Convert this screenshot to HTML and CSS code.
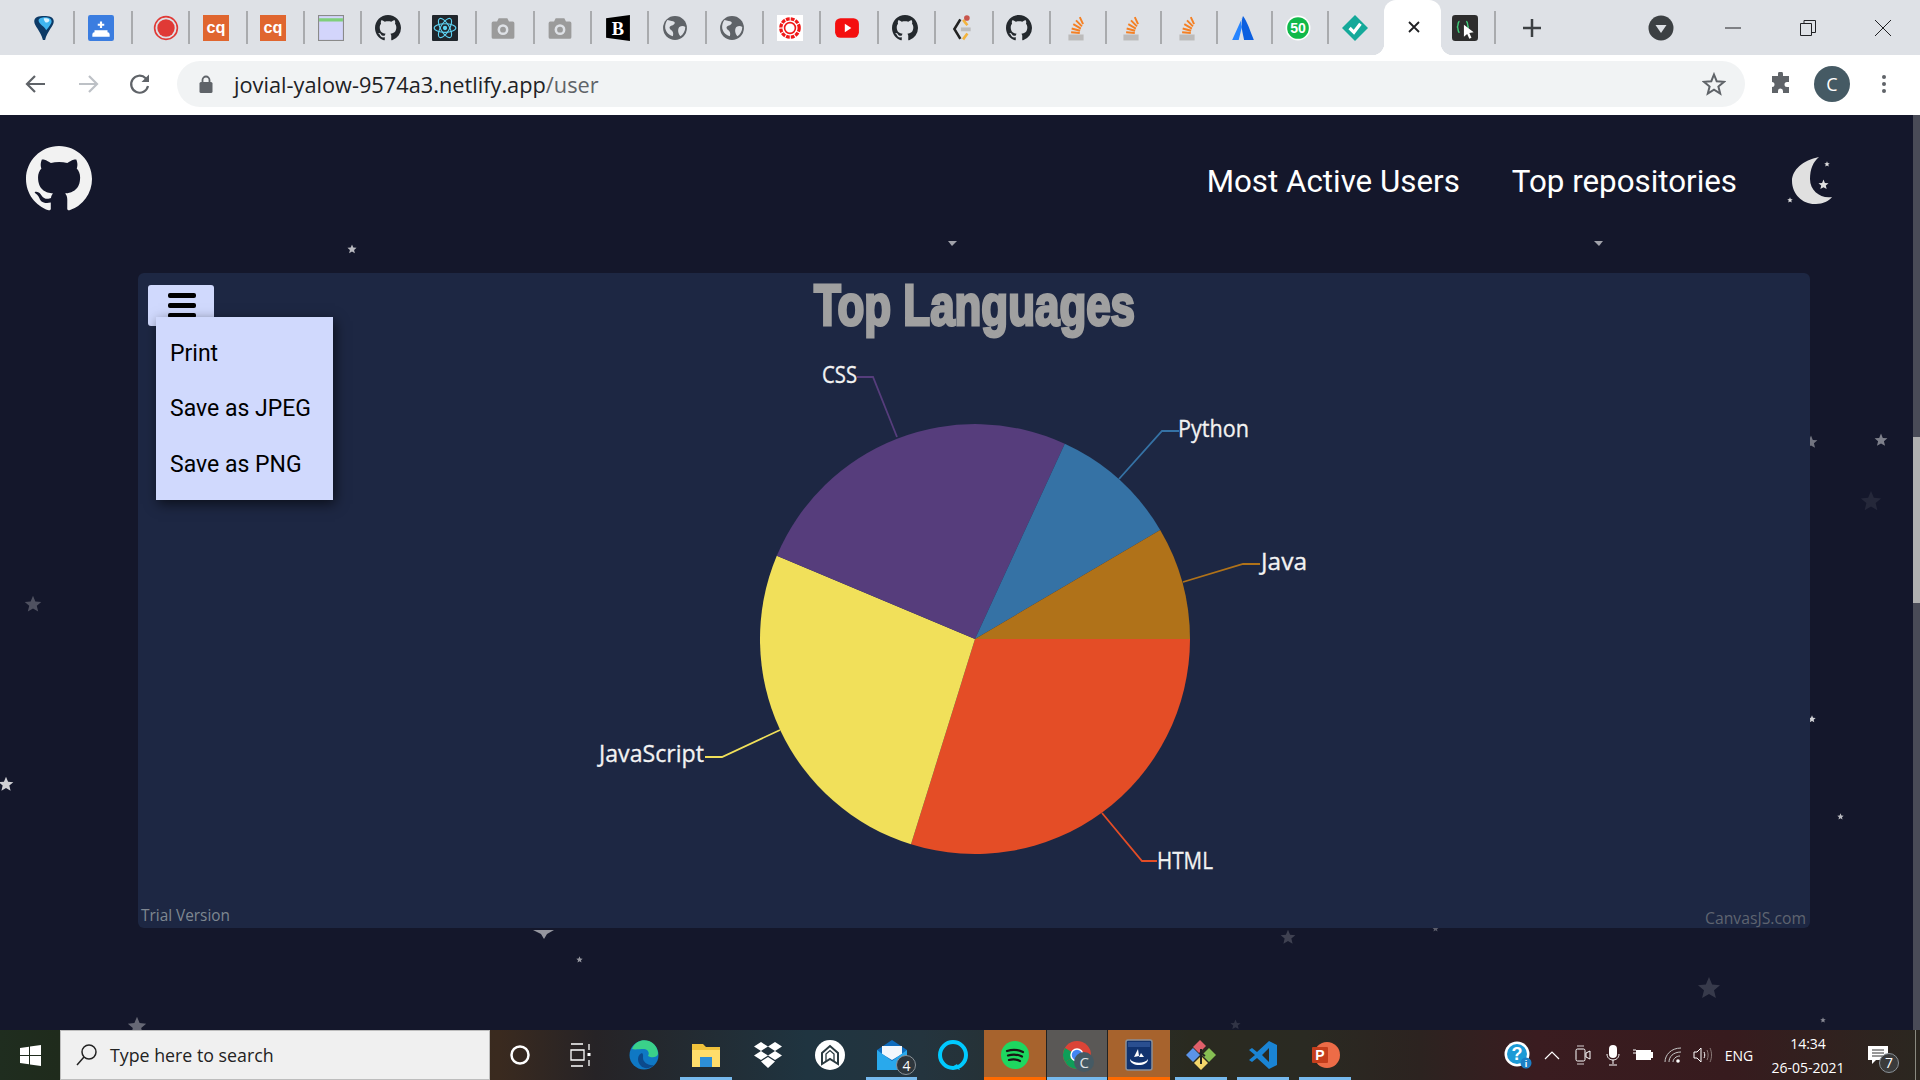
FILE: index.html
```html
<!DOCTYPE html>
<html lang="en">
<head>
    <meta charset="UTF-8">
    <title>Top Languages</title>
    <link rel="stylesheet" href="styles.css">
</head>
<body>

    <svg class="defs" width="0" height="0">
        <symbol id="gh" viewBox="0 0 16 16"><path d="M8 0C3.58 0 0 3.58 0 8c0 3.54 2.29 6.53 5.47 7.59.4.07.55-.17.55-.38 0-.19-.01-.82-.01-1.49-2.01.37-2.53-.49-2.69-.94-.09-.23-.48-.94-.82-1.13-.28-.15-.68-.52-.01-.53.63-.01 1.08.58 1.23.82.72 1.21 1.87.87 2.33.66.07-.52.28-.87.51-1.07-1.78-.2-3.64-.89-3.64-3.95 0-.87.31-1.59.82-2.15-.08-.2-.36-1.02.08-2.12 0 0 .67-.21 2.2.82.64-.18 1.32-.27 2-.27.68 0 1.36.09 2 .27 1.53-1.04 2.2-.82 2.2-.82.44 1.1.16 1.92.08 2.12.51.56.82 1.27.82 2.15 0 3.07-1.87 3.75-3.65 3.95.29.25.54.73.54 1.48 0 1.07-.01 1.93-.01 2.2 0 .21.15.46.55.38A8.013 8.013 0 0016 8c0-4.42-3.58-8-8-8z"/></symbol>
        <symbol id="so" viewBox="0 0 24 24"><rect x="5" y="18" width="14" height="5.500" fill="#bcbbbb"/><path d="M7.500 16l8 .6M8 12.500l7.800 2M9.500 8.500l7 4M12 5l5.500 5.500M15.500 2l3 6.500" fill="none" stroke="#f48024" stroke-width="1.800"/></symbol>
        <symbol id="cam" viewBox="0 0 24 24"><path d="M8 3h8l1.500 3H21a1.500 1.500 0 0 1 1.500 1.500v13A1.500 1.500 0 0 1 21 22H3a1.500 1.500 0 0 1-1.500-1.500v-13A1.500 1.500 0 0 1 3 6h3.500z" fill="#9b9b9b"/><circle cx="12" cy="13.500" r="5" fill="#dee1e6"/><circle cx="12" cy="13.500" r="2.700" fill="#9b9b9b"/></symbol>
        <symbol id="globe" viewBox="0 0 24 24"><circle cx="12" cy="12" r="11" fill="#5f6368"/><path d="M5 4.500c3 1 5 .5 6.500 2 1 1.500-1 3-3 3.500s-2 2.500-.5 3.500c2 1 3 3 2 6-3-.5-6-3-7-7-.5-3 .5-6 2-8zM16 11c2-1 4-1 5.500 0 0 4-2 7-4.500 8.500-2-2-3-6-1-8.500z" fill="#dee1e6"/></symbol>
        <symbol id="star" viewBox="0 0 24 24"><polygon points="12 1 15.100 8.500 23 9.200 17 14.300 18.900 22 12 18 5.100 22 7 14.300 1 9.200 8.900 8.500"/></symbol>
    </svg>

    <!-- browser tabs -->
    <div class="tabstrip">
        <div class="tab"><svg class="fav" viewBox="0 0 24 24"><path d="M3 6C3 2 7 1 12 1s9 1 9 5c0 4-6 9-8 17h-2C9 15 3 10 3 6z" fill="#0d3a66"/><path d="M7 5c0-2 3-3 6-3s6 1 6 4c0 2-3 6-5 8-1-3-7-6-7-9z" fill="#3fb5f0"/><path d="M12 3c2 0 5 0 5 2 0 1-2 2-3 2s-3-4-2-4z" fill="#d6f1ff"/></svg></div>
        <div class="tab"><svg class="fav" viewBox="0 0 24 24"><rect x="0" y="0" width="24" height="24" rx="2" fill="#3b7de0"/><path d="M11 6h2v2h2v2h-2v2h-2v-2H9V8h2zM6 14h12v2a2 2 0 0 1 2 2v2H4v-2a2 2 0 0 1 2-2z" fill="#fff"/></svg></div>
        <div class="tab"><svg class="fav fav-nudge" viewBox="0 0 24 24"><circle cx="12" cy="12" r="10.500" fill="none" stroke="#e03a36" stroke-width="1.500"/><circle cx="12" cy="12" r="8" fill="#e03a36"/></svg></div>
        <div class="tab"><svg class="fav" viewBox="0 0 24 24"><rect width="24" height="24" fill="#e0662f"/><text x="12" y="17" class="cq">cq</text></svg></div>
        <div class="tab"><svg class="fav" viewBox="0 0 24 24"><rect width="24" height="24" fill="#e0662f"/><text x="12" y="17" class="cq">cq</text></svg></div>
        <div class="tab"><svg class="fav" viewBox="0 0 24 24"><rect x=".5" y=".5" width="23" height="23" fill="#d3d5fb" stroke="#8a8a8a"/><rect x="1" y="3" width="22" height="3" fill="#7fcf7a"/></svg></div>
        <div class="tab"><svg class="fav gh-dark"><use href="#gh"/></svg></div>
        <div class="tab"><svg class="fav" viewBox="0 0 24 24"><rect width="24" height="24" rx="1" fill="#20262c"/><g fill="none" stroke="#5ed3f3" stroke-width="1"><ellipse cx="12" cy="12" rx="10" ry="4"/><ellipse cx="12" cy="12" rx="10" ry="4" transform="rotate(60 12 12)"/><ellipse cx="12" cy="12" rx="10" ry="4" transform="rotate(120 12 12)"/></g><circle cx="12" cy="12" r="2" fill="#5ed3f3"/></svg></div>
        <div class="tab"><svg class="fav"><use href="#cam"/></svg></div>
        <div class="tab"><svg class="fav"><use href="#cam"/></svg></div>
        <div class="tab"><svg class="fav" viewBox="0 0 24 24"><polygon points="1 3 23 0 23 24 1 21" fill="#000"/><text x="12" y="18" class="bold-b">B</text></svg></div>
        <div class="tab"><svg class="fav"><use href="#globe"/></svg></div>
        <div class="tab"><svg class="fav"><use href="#globe"/></svg></div>
        <div class="tab"><svg class="fav" viewBox="0 0 24 24"><rect width="24" height="24" fill="#fff"/><circle cx="12" cy="12" r="8.500" fill="none" stroke="#f01818" stroke-width="3" stroke-dasharray="3.500 1"/><circle cx="12" cy="12" r="5" fill="none" stroke="#f01818" stroke-width="1.500"/></svg></div>
        <div class="tab"><svg class="fav" viewBox="0 0 24 24"><rect x="1" y="3" width="22" height="18" rx="5" fill="#f40f0f"/><polygon points="10 8 16 12 10 16" fill="#fff"/></svg></div>
        <div class="tab"><svg class="fav gh-dark"><use href="#gh"/></svg></div>
        <div class="tab"><svg class="fav" viewBox="0 0 24 24"><path d="M10.500 4 5 13l5.500 9" fill="none" stroke="#222" stroke-width="2.400"/><path d="M13 4.500l4 5M17 17l-4 5.500" fill="none" stroke="#f3b33d" stroke-width="2.400"/><rect x="11" y="11.500" width="9" height="3.500" fill="#bcbcbc"/><circle cx="16.500" cy="2.800" r="2.600" fill="#c8554c"/></svg></div>
        <div class="tab"><svg class="fav gh-dark"><use href="#gh"/></svg></div>
        <div class="tab tab-narrow"><svg class="fav"><use href="#so"/></svg></div>
        <div class="tab tab-narrow"><svg class="fav"><use href="#so"/></svg></div>
        <div class="tab tab-narrow"><svg class="fav"><use href="#so"/></svg></div>
        <div class="tab tab-narrow"><svg class="fav" viewBox="0 0 24 24"><path d="M12 1c-2 3-2.500 7-1 10l-3 12H2z" fill="#2684ff"/><path d="M12 1c4 5 7 15 10 22h-9c-1-6-4-14-1-22z" fill="#0b5fe0"/></svg></div>
        <div class="tab tab-narrow"><svg class="fav" viewBox="0 0 24 24"><circle cx="12" cy="12" r="11.500" fill="#fff"/><circle cx="12" cy="12" r="10" fill="#10b94a"/><text x="12" y="17" class="fifty">50</text></svg></div>
        <div class="tab tab-plain"><svg class="fav" viewBox="0 0 24 24"><polygon points="12 0 24 12 12 24 0 12" fill="#14a99a"/><path d="M7 12l4 4 6-8" fill="none" stroke="#fff" stroke-width="3"/></svg></div>
        <div class="tab-active"><svg class="glyph" width="14" height="14" viewBox="0 0 14 14"><path d="M2 2l10 10M12 2L2 12" stroke="#202124" stroke-width="1.800"/></svg></div>
        <div class="tab tab-last"><svg class="fav" viewBox="0 0 24 24"><rect width="24" height="24" rx="3" fill="#2d2d2d"/><path d="M7 6C5 6 6 10 5 11c1 1 0 5 2 5M13 6c2 0 1 4 2 5-1 1 0 5-2 5" fill="none" stroke="#3fce7a" stroke-width="1.300"/><polygon points="11 9 20 16 16 16.500 18 21 16 22 14 17.500 11 20" fill="#fff"/></svg></div>
        <div class="newtab"><svg width="20" height="20" viewBox="0 0 20 20"><path d="M10 1v18M1 10h18" stroke="#3c4043" stroke-width="2.500"/></svg></div>
        <div class="strip-right">
            <div class="tabsearch"><svg width="26" height="26" viewBox="0 0 26 26"><circle cx="13" cy="13" r="12.500" fill="#3c4043"/><polygon points="7.500 10 18.500 10 13 18" fill="#dee1e6"/></svg></div>
            <div class="winbtn"><svg width="16" height="16" viewBox="0 0 16 16"><path d="M0 8h16" stroke="#202124" stroke-width="1"/></svg></div>
            <div class="winbtn"><svg width="16" height="16" viewBox="0 0 16 16"><path d="M.5 3.500h11v12H.5zM4 3.500V.500h11.500V12.500H11.500" fill="none" stroke="#202124" stroke-width="1"/></svg></div>
            <div class="winbtn"><svg width="16" height="16" viewBox="0 0 16 16"><path d="M0 0l16 16M16 0L0 16" stroke="#202124" stroke-width="1"/></svg></div>
        </div>
    </div>

    <!-- address bar -->
    <div class="toolbar">
        <div class="navbtn"><svg width="24" height="24" viewBox="0 0 24 24"><path d="M21 12H4M11 4l-8 8 8 8" fill="none" stroke="#5f6368" stroke-width="2.200"/></svg></div>
        <div class="navbtn"><svg width="24" height="24" viewBox="0 0 24 24"><path d="M3 12h17M13 4l8 8-8 8" fill="none" stroke="#bdc1c6" stroke-width="2.200"/></svg></div>
        <div class="navbtn"><svg width="24" height="24" viewBox="0 0 24 24"><path d="M20 14a8.500 8.500 0 1 1-2.300-7.800L20 8.500" fill="none" stroke="#5f6368" stroke-width="2.200"/><polygon points="21 2.500 21 10 13.500 10" fill="#5f6368"/></svg></div>
        <div class="omnibox">
            <svg class="lock" width="14" height="18" viewBox="0 0 14 18"><path d="M3.500 8V5a3.500 3.500 0 0 1 7 0v3" fill="none" stroke="#5f6368" stroke-width="1.800"/><rect x="0.500" y="7" width="13" height="11" rx="1.500" fill="#5f6368"/></svg>
            <span class="url">jovial-yalow-9574a3.netlify.app<span class="url-path">/user</span></span>
            <svg class="bookmark" width="24" height="24" viewBox="0 0 24 24"><polygon points="12 2.500 14.700 9.200 22 9.800 16.400 14.500 18.200 21.500 12 17.700 5.800 21.500 7.600 14.500 2 9.800 9.300 9.200" fill="none" stroke="#5f6368" stroke-width="2"/></svg>
        </div>
        <svg class="puzzle" width="24" height="24" viewBox="0 0 24 24"><path d="M9 2a2.500 2.500 0 0 1 5 0v2h6v6h-2a2.500 2.500 0 0 0 0 5h2v6h-6v-2a2.500 2.500 0 0 0-5 0v2H3v-6a2.500 2.500 0 0 0 0-5V4h6z" fill="#5f6368"/></svg>
        <div class="avatar">C</div>
        <svg class="kebab" width="6" height="20" viewBox="0 0 6 20"><circle cx="3" cy="3" r="2" fill="#5f6368"/><circle cx="3" cy="10" r="2" fill="#5f6368"/><circle cx="3" cy="17" r="2" fill="#5f6368"/></svg>
    </div>

    <!-- the page -->
    <div class="page">
        <svg class="sky" viewBox="0 115 1913 915" fill="#fff">
            <use href="#star" x="347" y="244" width="10" height="10" opacity=".7"/>
            <polygon points="948,241 957,241 952,246" opacity=".6"/>
            <polygon points="1594,241 1603,241 1599,246" opacity=".6"/>
            <use href="#star" x="1874" y="433" width="14" height="14" opacity=".45"/>
            <use href="#star" x="1860" y="490" width="22" height="22" opacity=".07"/>
            <use href="#star" x="24" y="595" width="18" height="18" opacity=".25"/>
            <use href="#star" x="-2" y="776" width="16" height="16" opacity=".8"/>
            <use href="#star" x="1808" y="715" width="8" height="8" opacity=".8"/>
            <use href="#star" x="1837" y="813" width="7" height="7" opacity=".7"/>
            <use href="#star" x="1804" y="435" width="14" height="14" opacity=".4"/>
            <polygon points="533,930 554,930 547,934 544,939 541,934" opacity=".55"/>
            <use href="#star" x="576" y="956" width="7" height="7" opacity=".55"/>
            <use href="#star" x="127" y="1016" width="20" height="20" opacity=".35"/>
            <use href="#star" x="1697" y="976" width="24" height="24" opacity=".15"/>
            <use href="#star" x="1280" y="929" width="16" height="16" opacity=".18"/>
            <use href="#star" x="1432" y="925" width="7" height="7" opacity=".3"/>
            <use href="#star" x="1820" y="1017" width="6" height="6" opacity=".5"/>
            <use href="#star" x="1230" y="1019" width="11" height="11" opacity=".12"/>
        </svg>

        <div class="content">
            <nav class="navbar">
                <svg class="logo"><use href="#gh"/></svg>
                <div class="navlinks">
                    <a class="navlink">Most Active Users</a>
                    <a class="navlink">Top repositories</a>
                    <svg class="moon" width="48" height="52" viewBox="0 0 48 52">
                        <path d="M32 2C16 5 5 15 5 26 5 40 17 50 29 49 36 49 42 46 45 42 34 44 23 36 23 24 23 14 26 7 32 2Z" fill="#e0e0e0"/>
                        <use href="#star" x="37" y="6" width="6" height="6" fill="#e0e0e0"/>
                        <use href="#star" x="31" y="24" width="11" height="11" fill="#e0e0e0"/>
                        <use href="#star" x="0" y="42" width="6" height="6" fill="#e0e0e0"/>
                    </svg>
                </div>
            </nav>

            <div class="chart">
                <svg class="chart-canvas" viewBox="138 273 1672 655">
                    <text class="chart-title" x="814" y="325" textLength="321" lengthAdjust="spacingAndGlyphs">Top Languages</text>

                    <path d="M975 639L1190 639A215 215 0 0 1 911 844.300Z" fill="#e44d26"/>
                    <path d="M975 639L911 844.300A215 215 0 0 1 776.800 555.700Z" fill="#f1e05a"/>
                    <path d="M975 639L776.800 555.700A215 215 0 0 1 1064.800 443.700Z" fill="#563d7c"/>
                    <path d="M975 639L1064.800 443.700A215 215 0 0 1 1160.200 529.900Z" fill="#3572a5"/>
                    <path d="M975 639L1160.200 529.900A215 215 0 0 1 1190 639Z" fill="#b07219"/>

                    <polyline class="leader" points="897,437 873,377 857,377" stroke="#563d7c"/>
                    <polyline class="leader" points="1119,479 1162,431 1179,431" stroke="#3572a5"/>
                    <polyline class="leader" points="1183,582 1243,564 1260,564" stroke="#b07219"/>
                    <polyline class="leader" points="780,730 722,757 705,757" stroke="#f1e05a"/>
                    <polyline class="leader" points="1102,813 1142,861 1157,861" stroke="#e44d26"/>

                    <text class="chart-label" x="822" y="383" textLength="35" lengthAdjust="spacingAndGlyphs">CSS</text>
                    <text class="chart-label" x="1178" y="437" textLength="71" lengthAdjust="spacingAndGlyphs">Python</text>
                    <text class="chart-label" x="1261" y="570" textLength="46" lengthAdjust="spacingAndGlyphs">Java</text>
                    <text class="chart-label" x="599" y="762" textLength="105" lengthAdjust="spacingAndGlyphs">JavaScript</text>
                    <text class="chart-label" x="1157" y="869" textLength="56" lengthAdjust="spacingAndGlyphs">HTML</text>

                    <text class="chart-trial" x="141" y="921" textLength="89" lengthAdjust="spacingAndGlyphs">Trial Version</text>
                    <text class="chart-credit" x="1705" y="924" textLength="101" lengthAdjust="spacingAndGlyphs">CanvasJS.com</text>
                </svg>

                <button class="menu-toggle" type="button">
                    <span class="menu-bar"></span>
                    <span class="menu-bar"></span>
                    <span class="menu-bar"></span>
                </button>
                <ul class="menu">
                    <li>Print</li>
                    <li>Save as JPEG</li>
                    <li>Save as PNG</li>
                </ul>
            </div>
        </div>

        <div class="scrollbar"><div class="thumb"></div></div>
    </div>

    <!-- windows taskbar -->
    <div class="taskbar">
        <div class="startbtn"><svg width="21" height="21" viewBox="0 0 21 21"><path d="M0 3l9-1.300V10H0zM10 1.500L21 0v10H10zM0 11h9v8.300L0 18zM10 11h11v10l-11-1.500z" fill="#fff"/></svg></div>
        <div class="searchbox">
            <svg width="24" height="24" viewBox="0 0 24 24"><circle cx="14" cy="9" r="7" fill="none" stroke="#222" stroke-width="1.500"/><path d="M9 14l-7 8" stroke="#222" stroke-width="1.500"/></svg>
            <span>Type here to search</span>
        </div>
        <div class="sysbtn"><svg width="22" height="22" viewBox="0 0 22 22"><circle cx="11" cy="11" r="8.500" fill="none" stroke="#fff" stroke-width="2.500"/></svg></div>
        <div class="sysbtn"><svg width="22" height="24" viewBox="0 0 22 24"><path d="M2 1h12M2 23h12M2 7h13v10H2zM20 1v6M20 17v6" fill="none" stroke="#fff" stroke-width="1.300"/><rect x="18.500" y="10" width="3" height="3" fill="#fff"/></svg></div>

        <div class="apps">
            <div class="app"><svg width="30" height="32" viewBox="0 0 30 32"><circle cx="15" cy="16" r="14.500" fill="#0f78c4"/><path d="M3 10C6 2 14 0 20 2c6 2 9 8 9 13-1 4-7 4-10 2 2-3 0-7-4-7-5 0-9 1-12 0z" fill="#3ad18a"/><path d="M13 14c-4 1-6 8-1 13 3 3 9 3 13-1-6 1-11-3-11-7 0-2 .5-4-1-5z" fill="#0c4a8c"/></svg></div>
            <div class="app app-open"><svg width="30" height="28" viewBox="0 0 30 28"><path d="M1 3h11l3 3h14v20H1z" fill="#f0c13b"/><rect x="1" y="9" width="28" height="17" fill="#ffdd6b"/><rect x="9" y="16" width="12" height="10" fill="#2d8fd8"/></svg></div>
            <div class="app"><svg width="30" height="28" viewBox="0 0 30 28"><path d="M8 1l7 4.500L8 10 1 5.500zM22 1l7 4.500-7 4.500-7-4.500zM8 10l7 4.500L8 19l-7-4.500zM22 10l7 4.500-7 4.500-7-4.500zM15 16l7 4.500-7 6.500-7-6.500z" fill="#fff"/></svg></div>
            <div class="app"><svg width="30" height="30" viewBox="0 0 30 30"><circle cx="15" cy="15" r="15" fill="#fff"/><path d="M7 24V13l8-7 8 7v11l-8-5z" fill="none" stroke="#2a3a40" stroke-width="2"/><path d="M11 22V14l4-3.500 4 3.500v8" fill="none" stroke="#2a3a40" stroke-width="1.300"/></svg></div>
            <div class="app app-open">
                <svg width="30" height="30" viewBox="0 0 30 30"><polygon points="0 10 15 0 30 10 30 30 0 30" fill="#0f6cbd"/><polygon points="5 6 25 6 25 14 15 20 5 14" fill="#f2f7fc"/><path d="M0 10l15 11 15-11v20H0z" fill="#29a9ec"/></svg>
                <span class="badge">4</span>
            </div>
            <div class="app"><svg width="30" height="30" viewBox="0 0 30 30"><circle cx="15" cy="15" r="13" fill="none" stroke="#00caff" stroke-width="4"/><polygon points="14 27 22 30 19 24" fill="#00caff"/></svg></div>
            <div class="app app-alert"><svg width="28" height="28" viewBox="0 0 28 28"><circle cx="14" cy="14" r="14" fill="#1ed760"/><path d="M6 10c6-2 11-1.500 16 1M7 14.500c5-1.500 10-1 14 1M8 19c4-1 8-.5 11 1" fill="none" stroke="#191414" stroke-width="2.200" stroke-linecap="round"/></svg></div>
            <div class="app app-active">
                <svg width="28" height="28" viewBox="0 0 28 28"><circle cx="14" cy="14" r="14" fill="#db4437"/><path d="M14 14L2 21A14 14 0 0 0 14 28z" fill="#0f9d58"/><path d="M14 14L2 21A14 14 0 0 1 2 7z" fill="#0f9d58"/><path d="M14 14h14a14 14 0 0 1-14 14z" fill="#f4b400"/><circle cx="14" cy="14" r="6" fill="#4285f4" stroke="#fff" stroke-width="1.500"/></svg>
                <span class="profile">C</span>
            </div>
            <div class="app app-alert"><svg width="28" height="32" viewBox="0 0 28 32"><rect x="1" y="1" width="26" height="30" rx="2" fill="#11336f" stroke="#8a9099" stroke-width="1.500"/><rect x="3" y="3" width="22" height="5" fill="#2a4f90"/><path d="M5 20c3 5 15 5 18 0 0 8-18 8-18 0zM13 10l1 7-5 1zM16 14l3 4h-5z" fill="#fff"/></svg></div>
            <div class="app app-open"><svg width="30" height="30" viewBox="0 0 30 30"><polygon points="15 8 22 15 15 22 8 15" fill="#2a2a20"/><polygon points="7 7 14 0 20 6 13 13" fill="#e0606a"/><polygon points="16 15 23 8 30 15 23 22" fill="#86bf53"/><polygon points="0 15 7 8 14 15 7 22" fill="#5b93e8"/><polygon points="8 23 15 16 22 23 15 30" fill="#f3d56a"/><path d="M15 9v15M15 13l4 3" stroke="#222" stroke-width="2" fill="none"/></svg></div>
            <div class="app app-open"><svg width="30" height="30" viewBox="0 0 30 30"><path d="M21 1l8 4v20l-8 4L9 18l-5 4-3-2 6-5-6-5 3-2 5 4zM21 8l-7 7 7 7z" fill="#1a84d4"/></svg></div>
            <div class="app app-open"><svg width="30" height="30" viewBox="0 0 30 30"><circle cx="17" cy="15" r="13" fill="#ed6c47"/><rect x="2" y="7" width="16" height="16" rx="1" fill="#c43e1c"/><text x="10" y="20" class="ppt">P</text></svg></div>
        </div>

        <div class="tray">
            <div class="tray-item tray-help"><svg width="28" height="28" viewBox="0 0 28 28"><circle cx="13" cy="13" r="12.500" fill="#fff"/><circle cx="13" cy="13" r="10" fill="#1c9ad6"/><text x="13" y="19" class="help-q">?</text><circle cx="22" cy="22" r="5.500" fill="#1c7fc6"/><text x="22" y="25.500" class="help-i">i</text></svg></div>
            <div class="tray-item tray-chev"><svg width="16" height="10" viewBox="0 0 16 10"><path d="M1 9l7-7 7 7" fill="none" stroke="#fff" stroke-width="1.200"/></svg></div>
            <div class="tray-item tray-video"><svg width="16" height="20" viewBox="0 0 16 20"><rect x="1" y="4" width="9" height="12" rx="1.500" fill="none" stroke="#fff"/><path d="M11 8l4-2v8l-4-2z" fill="none" stroke="#fff"/><path d="M2 1h7M2 19h7" stroke="#fff" stroke-width=".8"/></svg></div>
            <div class="tray-item tray-mic"><svg width="14" height="21" viewBox="0 0 14 21"><rect x="3" y="0" width="8" height="13" rx="4" fill="#fff"/><path d="M1 9c0 8 12 8 12 0M7 15v4M3 20h8" fill="none" stroke="#fff"/></svg></div>
            <div class="tray-item tray-batt"><svg width="20" height="14" viewBox="0 0 20 14"><rect x="3" y="2" width="15" height="10" fill="#fff"/><rect x="18" y="4" width="2" height="6" fill="#fff"/><path d="M0 2h3M0 5h3" stroke="#fff"/></svg></div>
            <div class="tray-item tray-wifi"><svg width="18" height="16" viewBox="0 0 18 16"><path d="M1 15C1 8 7 1 17 1M5 15c0-5 4-10 12-10M9 15c0-3 3-6 7-6" fill="none" stroke="#c8c8c8" stroke-width="1"/><circle cx="14" cy="14" r="1.800" fill="#fff"/></svg></div>
            <div class="tray-item tray-sound"><svg width="20" height="16" viewBox="0 0 20 16"><path d="M1 5h3l4-4v14l-4-4H1z" fill="none" stroke="#fff"/><path d="M11 5c1 2 1 4 0 6" fill="none" stroke="#fff"/><path d="M14 3c1.500 3 1.500 7 0 10M17 1c2 4 2 10 0 14" fill="none" stroke="#8a7a78"/></svg></div>
            <div class="tray-lang">ENG</div>
            <div class="clock"><span>14:34</span><span>26-05-2021</span></div>
            <div class="notify">
                <svg width="20" height="19" viewBox="0 0 20 19"><path d="M0 0h20v14H8l-4 4v-4H0z" fill="#fff"/><path d="M4 4h12M4 7h12M4 10h12" stroke="#333"/></svg>
                <span class="badge">7</span>
            </div>
            <div class="showdesktop"></div>
        </div>
    </div>

</body>
</html>
```

FILE: styles.css
```css
* {
    box-sizing: border-box;
}
body {
    margin: 0;
    height: 100vh;
    overflow: hidden;
    display: flex;
    flex-direction: column;
    font-family: "Open Sans", sans-serif;
    background: #14172b;
}
.defs {
    display: block;
    height: 0;
}

/* tabs */
.tabstrip {
    display: flex;
    height: 55px;
    padding-left: 18px;
    background: #dee1e6;
}
.tab {
    display: flex;
    align-items: center;
    justify-content: center;
    width: 57.400px;
    height: 33px;
    margin-top: 11px;
    padding-right: 4px;
    border-right: 2px solid #a9abae;
}
.tab-narrow {
    width: 55.600px;
}
.tab-plain {
    width: 55px;
    border-right: none;
}
.tab-last {
    width: 55px;
    padding-right: 6px;
}
.fav {
    flex: none;
    width: 26px;
    height: 26px;
}
.fav-nudge {
    margin-left: 15px;
}
.gh-dark {
    fill: #24292e;
}
.cq {
    font: bold 15px "Liberation Sans", sans-serif;
    fill: #fff;
    text-anchor: middle;
}
.bold-b {
    font: bold 17px "Liberation Serif", serif;
    fill: #fff;
    text-anchor: middle;
}
.fifty {
    font: bold 13px "Liberation Sans", sans-serif;
    fill: #fff;
    text-anchor: middle;
}
.tab-active {
    position: relative;
    display: flex;
    align-items: center;
    justify-content: center;
    width: 57px;
    height: 55px;
    padding: 0 0 1px 3px;
    background: #fff;
    border-radius: 12px 12px 0 0;
}
.tab-active::before,
.tab-active::after {
    content: "";
    position: absolute;
    bottom: 0;
    width: 12px;
    height: 12px;
}
.tab-active::before {
    left: -12px;
    background: radial-gradient(circle at 0 0, #dee1e6 12px, #fff 12.500px);
}
.tab-active::after {
    right: -12px;
    background: radial-gradient(circle at 100% 0, #dee1e6 12px, #fff 12.500px);
}
.newtab {
    display: flex;
    align-items: center;
    justify-content: center;
    width: 72px;
    height: 55px;
}
.strip-right {
    display: flex;
    align-items: center;
    margin-left: auto;
}
.tabsearch {
    display: flex;
    margin-right: 21px;
}
.winbtn {
    display: flex;
    align-items: center;
    justify-content: center;
    width: 75px;
    height: 55px;
}

/* address bar */
.toolbar {
    display: flex;
    align-items: center;
    height: 60px;
    padding: 0 0 2px 10px;
    background: #fff;
}
.navbtn {
    display: flex;
    align-items: center;
    justify-content: center;
    width: 52px;
}
.omnibox {
    display: flex;
    align-items: center;
    width: 1568px;
    height: 46px;
    margin-left: 11px;
    padding: 0 19px 0 22px;
    border-radius: 23px;
    background: #f1f3f4;
}
.url {
    margin-left: 21px;
    font-size: 21.750px;
    color: #202124;
    white-space: nowrap;
}
.url-path {
    color: #5f6368;
}
.bookmark {
    margin-left: auto;
}
.puzzle {
    margin-left: 24px;
}
.avatar {
    display: flex;
    align-items: center;
    justify-content: center;
    width: 36px;
    height: 36px;
    margin-left: 21px;
    border-radius: 50%;
    background: #455a64;
    color: #fff;
    font-size: 18px;
}
.kebab {
    margin-left: 31px;
}

/* page */
.page {
    position: relative;
    display: flex;
    flex: 1;
    min-height: 0;
    background: #14172b;
}
.sky {
    position: absolute;
    left: 0;
    top: 0;
    width: 1913px;
    height: 915px;
    overflow: hidden;
}
.content {
    position: relative;
    flex: 1;
}
.navbar {
    display: flex;
    align-items: center;
    height: 128px;
    margin-bottom: 30px;
    padding: 0 78px 0 26px;
}
.logo {
    width: 66px;
    height: 66px;
    fill: #f2f2f2;
}
.navlinks {
    display: flex;
    align-items: center;
    margin-left: auto;
}
.navlink {
    margin-left: 52px;
    margin-top: 4px;
    font: 31.300px Roboto, sans-serif;
    color: #fff;
}
.moon {
    margin-left: 50px;
    margin-top: 4px;
}
.scrollbar {
    position: relative;
    width: 7px;
    padding-top: 322px;
    background: #494b57;
}
.thumb {
    height: 166px;
    background: #b0b0b0;
}

/* chart */
.chart {
    position: relative;
    width: 1672px;
    height: 655px;
    margin-left: 138px;
    border-radius: 6px;
    background: #1d2743;
}
.chart-canvas {
    display: block;
    width: 1672px;
    height: 655px;
}
.chart-title {
    font: bold 57px "Liberation Sans", sans-serif;
    fill: #a0a0a0;
    stroke: #a0a0a0;
    stroke-width: 3px;
}
.chart-label {
    font: 23px "Open Sans", sans-serif;
    fill: #f2f2f2;
    stroke: #f2f2f2;
    stroke-width: 0.300px;
}
.chart-trial {
    font: 16px "Open Sans", sans-serif;
    fill: #7f8791;
}
.chart-credit {
    font: 16px "Open Sans", sans-serif;
    fill: #5f6470;
}
.leader {
    fill: none;
    stroke-width: 1.800;
}
.menu-toggle {
    position: absolute;
    left: 10px;
    top: 12px;
    display: flex;
    flex-direction: column;
    align-items: center;
    gap: 5px;
    width: 66px;
    height: 41px;
    padding: 8px 0 0 2px;
    border: none;
    border-radius: 3px;
    background: #d0d9fd;
}
.menu-bar {
    display: block;
    width: 28px;
    height: 5px;
    border-radius: 2px;
    background: #000;
}
.menu {
    position: absolute;
    left: 18px;
    top: 44px;
    width: 177px;
    height: 183px;
    margin: 0;
    padding: 9px 0 0;
    list-style: none;
    background: #d0d9fd;
    box-shadow: 2px 4px 12px rgba(0, 0, 0, 0.6);
}
.menu li {
    height: 55.300px;
    padding-left: 14px;
    font: 23px/55.300px Roboto, sans-serif;
    color: #000;
}

/* taskbar */
.taskbar {
    display: flex;
    height: 50px;
    color: #fff;
    background: linear-gradient(90deg, #1f2d1f 0, #1f2b1c 3%, #3a2a1f 26%, #262326 31%, #1f3440 42%, #24343e 48%, #2a2a20 62%, #2a2a22 68%, #2c2320 74%, #3a1c20 80%, #371b1e 90%, #2b2720 100%);
}
.startbtn {
    display: flex;
    align-items: center;
    justify-content: center;
    width: 60px;
}
.searchbox {
    display: flex;
    align-items: center;
    width: 430px;
    padding-left: 14px;
    background: #f0f0f0;
    border: 1px solid #bdbdbd;
    font-size: 17.800px;
    color: #222;
}
.searchbox span {
    margin-left: 11px;
}
.sysbtn {
    display: flex;
    align-items: center;
    justify-content: center;
    width: 60px;
}
.apps {
    display: flex;
    margin-left: 3px;
}
.app {
    position: relative;
    display: flex;
    align-items: center;
    justify-content: center;
    width: 61.900px;
    height: 50px;
}
.app-open::after,
.app-active::after,
.app-alert::after {
    content: "";
    position: absolute;
    left: 5px;
    right: 5px;
    bottom: 0;
    height: 3px;
    background: #76b9ed;
}
.app-alert {
    background: #a7632d;
}
.app-alert::after {
    left: 0;
    right: 0;
    background: #ff6a00;
}
.app-active {
    background: #5a5856;
    border-left: 1px solid #222;
    border-right: 1px solid #222;
}
.app-active::after {
    left: 0;
    right: 0;
}
.badge {
    position: absolute;
    right: 6px;
    bottom: 5px;
    display: flex;
    align-items: center;
    justify-content: center;
    width: 20px;
    height: 20px;
    border: 1px solid #8a9298;
    border-radius: 50%;
    background: #2e363c;
    font-size: 14px;
    color: #fff;
}
.profile {
    position: absolute;
    right: 13px;
    bottom: 8px;
    display: flex;
    align-items: center;
    justify-content: center;
    width: 20px;
    height: 20px;
    border-radius: 50%;
    background: #455a64;
    font-size: 15px;
    color: #dfe3e6;
}
.ppt {
    font: bold 14px "Liberation Sans", sans-serif;
    fill: #fff;
    text-anchor: middle;
}
.help-q {
    font: bold 18px "Liberation Sans", sans-serif;
    fill: #fff;
    text-anchor: middle;
}
.help-i {
    font: bold 9px "Liberation Sans", sans-serif;
    fill: #fff;
    text-anchor: middle;
}
.tray {
    display: flex;
    align-items: center;
    margin-left: auto;
}
.tray-item {
    display: flex;
    align-items: center;
    justify-content: center;
}
.tray-help { width: 35px; }
.tray-chev { width: 33px; }
.tray-video { width: 30px; }
.tray-mic { width: 29px; }
.tray-batt { width: 31px; }
.tray-wifi { width: 30px; }
.tray-sound { width: 29px; }
.tray-lang {
    width: 44px;
    text-align: center;
    font-size: 14px;
}
.clock {
    display: flex;
    flex-direction: column;
    align-items: center;
    gap: 3px;
    width: 94px;
    font-size: 14px;
    line-height: 21px;
}
.notify {
    position: relative;
    display: flex;
    justify-content: center;
    width: 48px;
    padding-right: 2px;
}
.notify .badge {
    right: 4px;
    bottom: -8px;
    background: #3b3b3b;
    font-size: 14px;
}
.showdesktop {
    width: 17px;
    height: 50px;
    margin-left: 0;
    border-right: 5px solid transparent;
    position: relative;
}
.showdesktop::after {
    content: "";
    position: absolute;
    left: 12px;
    top: 0;
    width: 1px;
    height: 50px;
    background: #8a8a80;
}
```
